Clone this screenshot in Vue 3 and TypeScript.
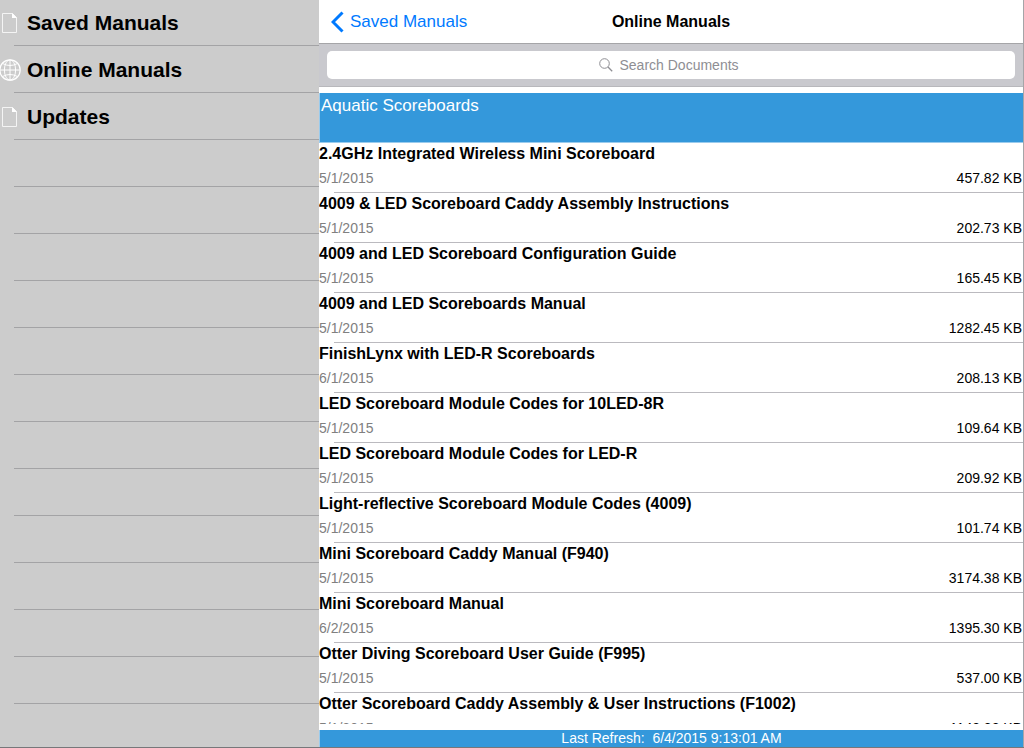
<script setup lang="ts">
import { ref } from 'vue'

interface NavItem {
  label: string
  icon: 'page' | 'globe'
}

interface ManualDoc {
  title: string
  date: string
  size: string
}

const navItems: NavItem[] = [
  { label: 'Saved Manuals', icon: 'page' },
  { label: 'Online Manuals', icon: 'globe' },
  { label: 'Updates', icon: 'page' },
]

const emptyRows = 12

const documents: ManualDoc[] = [
  { title: '2.4GHz Integrated Wireless Mini Scoreboard', date: '5/1/2015', size: '457.82 KB' },
  { title: '4009 & LED Scoreboard Caddy Assembly Instructions', date: '5/1/2015', size: '202.73 KB' },
  { title: '4009 and LED Scoreboard Configuration Guide', date: '5/1/2015', size: '165.45 KB' },
  { title: '4009 and LED Scoreboards Manual', date: '5/1/2015', size: '1282.45 KB' },
  { title: 'FinishLynx with LED-R Scoreboards', date: '6/1/2015', size: '208.13 KB' },
  { title: 'LED Scoreboard Module Codes for 10LED-8R', date: '5/1/2015', size: '109.64 KB' },
  { title: 'LED Scoreboard Module Codes for LED-R', date: '5/1/2015', size: '209.92 KB' },
  { title: 'Light-reflective Scoreboard Module Codes (4009)', date: '5/1/2015', size: '101.74 KB' },
  { title: 'Mini Scoreboard Caddy Manual (F940)', date: '5/1/2015', size: '3174.38 KB' },
  { title: 'Mini Scoreboard Manual', date: '6/2/2015', size: '1395.30 KB' },
  { title: 'Otter Diving Scoreboard User Guide (F995)', date: '5/1/2015', size: '537.00 KB' },
  { title: 'Otter Scoreboard Caddy Assembly & User Instructions (F1002)', date: '5/1/2015', size: '1143.32 KB' },
]

const query = ref('')
</script>

<template>
  <div class="app">
    <nav class="sidebar" aria-label="Sections">
      <ul class="nav-list">
        <li v-for="item in navItems" :key="item.label" class="nav-row">
          <a href="#" class="nav-link">
            <svg v-if="item.icon === 'page'" class="nav-icon" viewBox="0 0 24 24" aria-hidden="true">
              <path d="M2.5 2.5H12.5L16.5 6.5V21.5H2.5Z" fill="none" stroke="#f4f4f4" />
              <path d="M12 2L17 7H12Z" fill="#fff" />
            </svg>
            <svg v-else class="nav-icon" viewBox="0 0 24 24" aria-hidden="true" fill="none" stroke="#fff">
              <circle cx="10" cy="12" r="10.2" stroke-width="1.2" />
              <ellipse cx="10" cy="12" rx="5.6" ry="10.2" />
              <path d="M10 2V22M0 12H20M2.500 5.500Q10 9.500 17.500 5.500M2.500 18.500Q10 14.500 17.500 18.500" />
            </svg>
            <span>{{ item.label }}</span>
          </a>
        </li>
        <li v-for="n in emptyRows" :key="n" class="nav-row" aria-hidden="true"></li>
      </ul>
    </nav>

    <main class="detail">
      <header class="topbar">
        <button type="button" class="back">
          <svg class="chevron" viewBox="0 0 13 22" aria-hidden="true">
            <path d="M11.500 1.500L2 11L11.500 20.500" fill="none" stroke="#007aff" stroke-width="3" />
          </svg>
          <span>Saved Manuals</span>
        </button>
        <h1 class="heading">Online Manuals</h1>
      </header>

      <div class="searchbar">
        <label class="search">
          <svg class="search-icon" viewBox="0 0 14 14" aria-hidden="true" fill="none" stroke="#8e8e93">
            <circle cx="5.500" cy="5.500" r="4.800" />
            <path d="M9 9L13.200 13.200" stroke-width="1.300" />
          </svg>
          <input v-model="query" class="search-input" type="text" placeholder="Search Documents" aria-label="Search Documents" />
        </label>
      </div>

      <section class="results">
        <h2 class="group">Aquatic Scoreboards</h2>
        <ul class="doc-list">
          <li v-for="doc in documents" :key="doc.title" class="doc">
            <h3 class="doc-title">{{ doc.title }}</h3>
            <div class="doc-meta">
              <span class="doc-date">{{ doc.date }}</span>
              <span>{{ doc.size }}</span>
            </div>
          </li>
        </ul>
      </section>

      <footer class="status">Last Refresh:&nbsp; 6/4/2015 9:13:01 AM</footer>
    </main>
  </div>
</template>

<style>
body {
  margin: 0;
}
</style>

<style scoped>
.app {
  display: grid;
  grid-template-columns: 319px 1fr;
  height: 100vh;
  box-sizing: border-box;
  overflow: hidden;
  border-bottom: 1px solid #77777a;
  background: #fff;
  color: #000;
  font-family: "Liberation Sans", Arial, sans-serif;
}

h1,
h2,
h3,
ul {
  margin: 0;
  padding: 0;
  list-style: none;
}

.sidebar {
  overflow: hidden;
  background: #ccc;
}

.nav-row {
  height: 47px;
  box-sizing: border-box;
  background: linear-gradient(#a3a3a5, #a3a3a5) 14px 100% / 100% 1px no-repeat;
}

.nav-row:first-child {
  height: 46px;
}

.nav-link {
  display: flex;
  align-items: center;
  gap: 3px;
  height: 100%;
  color: #000;
  font-size: 21px;
  font-weight: bold;
  line-height: 24px;
  text-decoration: none;
}

.nav-icon {
  width: 24px;
  height: 24px;
  overflow: visible;
}

.detail {
  display: flex;
  flex-direction: column;
  min-width: 0;
  min-height: 0;
  border-right: 1px solid #a5a5a8;
}

.topbar {
  display: grid;
  grid-template-columns: 1fr auto 1fr;
  align-items: center;
  flex: none;
  height: 43px;
  border-bottom: 1px solid #a5a5a8;
}

.back {
  display: flex;
  align-items: center;
  gap: 6px;
  padding: 0 0 0 12px;
  border: 0;
  background: none;
  color: #007aff;
  font: 17px/20px "Liberation Sans", Arial, sans-serif;
  cursor: pointer;
}

.chevron {
  width: 13px;
  height: 22px;
}

.heading {
  font-size: 16px;
  line-height: 20px;
}

.searchbar {
  flex: none;
  padding: 7px 8px;
  border-bottom: 1px solid #b8b8bc;
  background: #c9c9ce;
}

.search {
  display: flex;
  align-items: center;
  justify-content: center;
  gap: 7px;
  height: 28px;
  border-radius: 5px;
  background: #fff;
}

.search-icon {
  width: 14px;
  height: 14px;
}

.search-input {
  width: 124px;
  padding: 0;
  border: 0;
  outline: 0;
  background: none;
  font: 14px/20px "Liberation Sans", Arial, sans-serif;
}

.search-input::placeholder {
  color: #8e8e93;
  opacity: 1;
}

.results {
  flex: 1;
  min-height: 0;
  margin: 6px 0;
  overflow: hidden;
}

.group {
  height: 49px;
  padding-left: 1px;
  border-bottom: 1px solid #9acbed;
  border-left: 1px solid #9acbed;
  background: #3498db;
  color: #fff;
  font-size: 17px;
  font-weight: normal;
  line-height: 26px;
}

.doc {
  height: 50px;
  box-sizing: border-box;
  padding-right: 1px;
  background: linear-gradient(#bbbabf, #bbbabf) 15px 100% / 100% 1px no-repeat;
}

.doc-title {
  font-size: 16px;
  line-height: 22px;
  white-space: nowrap;
}

.doc-meta {
  display: flex;
  justify-content: space-between;
  padding-top: 4px;
  font-size: 14px;
  line-height: 18px;
}

.doc-date {
  color: #808080;
}

.status {
  flex: none;
  border-left: 1px solid #9acbed;
  background: #3498db;
  color: #fff;
  font-size: 14px;
  line-height: 17px;
  text-align: center;
}
</style>
